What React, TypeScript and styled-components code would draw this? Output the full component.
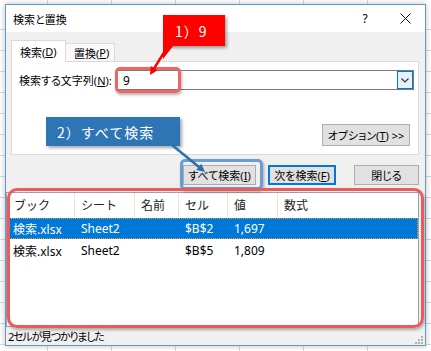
import styled, { createGlobalStyle } from "styled-components";

const GlobalStyle = createGlobalStyle`
  html, body {
    margin: 0;
    padding: 0;
  }
  body {
    width: 431px;
    height: 351px;
    overflow: hidden;
    font-family: "Noto Sans", "Noto Sans CJK JP", sans-serif;
    color: #000;
  }
`;

const Sheet = styled.div`
  position: relative;
  width: 431px;
  height: 351px;
  box-sizing: border-box;
  padding: 4px 0 0 5px;
  overflow: hidden;
  background-color: #fff;
  background-image: repeating-linear-gradient(
      to bottom,
      transparent 0 20px,
      #d8d8d8 20px 21px
    ),
    repeating-linear-gradient(to right, transparent 0 63px, #d8d8d8 63px 64px);
  background-position: 0 9px, -16px 0;
`;

const Dialog = styled.div`
  width: 421px;
  height: 342px;
  box-sizing: border-box;
  border: 1px solid #5c9bd6;
  background: #f0f0f0;
  display: flex;
  flex-direction: column;
  font-size: 11px;
  font-feature-settings: "palt";
  box-shadow: 0 0 6px rgba(0, 0, 0, 0.25);
`;

const TitleBar = styled.div`
  height: 27px;
  flex: none;
  background: #fff;
  display: flex;
  align-items: center;
  padding-left: 7px;
`;

const Title = styled.span`
  font-size: 11px;
`;

const TitleButton = styled.div`
  width: 40px;
  height: 27px;
  display: flex;
  align-items: center;
  justify-content: center;
  font-size: 12px;
  &:first-of-type {
    margin-left: auto;
  }
`;

const TopArea = styled.div`
  padding: 8px 6px 0 5px;
  display: flex;
  flex-direction: column;
`;

const Tabs = styled.div`
  display: flex;
  align-items: flex-end;
  height: 22px;
  margin-bottom: -1px;
  position: relative;
  z-index: 1;
`;

const Tab = styled.div<{ $active?: boolean; $w: number }>`
  width: ${(p) => p.$w}px;
  height: ${(p) => (p.$active ? 22 : 18)}px;
  margin-bottom: ${(p) => (p.$active ? 0 : 1)}px;
  box-sizing: border-box;
  padding-left: 8px;
  display: flex;
  align-items: center;
  background: ${(p) => (p.$active ? "#fff" : "#f9f9f9")};
  border: 1px solid #d9d9d9;
  border-left-width: ${(p) => (p.$active ? 1 : 0)}px;
  border-bottom: none;
`;

const Panel = styled.div`
  height: 94px;
  box-sizing: border-box;
  background: #fff;
  border: 1px solid #d9d9d9;
  padding: 8px 4px 8px 7px;
  display: flex;
  flex-direction: column;
  justify-content: space-between;
`;

const FindRow = styled.div`
  display: flex;
  align-items: center;
  height: 20px;
`;

const Label = styled.span`
  width: 98px;
`;

const ComboBox = styled.div`
  width: 297px;
  height: 20px;
  box-sizing: border-box;
  border: 1px solid #7a7a7a;
  background: #fff;
  display: flex;
  align-items: center;
  padding-left: 5px;
  font-size: 12px;
`;

const DropButton = styled.div`
  margin-left: auto;
  width: 16px;
  height: 18px;
  box-sizing: border-box;
  border: 1px solid #0078d7;
  background: #e5f1fb;
  display: flex;
  align-items: center;
  justify-content: center;
`;

const Button = styled.div<{ $w: number; $default?: boolean; $h?: number }>`
  width: ${(p) => p.$w}px;
  height: ${(p) => p.$h ?? 20}px;
  box-sizing: border-box;
  background: #e1e1e1;
  border: 1px solid ${(p) => (p.$default ? "#0078d7" : "#adadad")};
  box-shadow: ${(p) => (p.$default ? "inset 0 0 0 1px #0078d7" : "none")};
  display: flex;
  align-items: center;
  justify-content: center;
  flex: none;
`;

const OptionsButton = styled(Button)`
  align-self: flex-end;
  margin-right: 4px;
`;

const ButtonRow = styled.div`
  display: flex;
  justify-content: flex-end;
  gap: 12px;
  margin-top: 10px;
  height: 20px;
`;

const CloseButton = styled(Button)`
  margin-left: 6px;
`;

const Key = styled.span`
  text-decoration: underline;
`;

const ResultList = styled.div`
  margin-top: 7px;
  margin-right: 6px;
  height: 135px;
  flex: none;
  box-sizing: border-box;
  background: #fff;
  border: 1px solid #a0a0a0;
  font-size: 12px;
  font-feature-settings: normal;
`;

const columns = "68px 60px 44px 49px 50px 1fr";

const HeaderRow = styled.div`
  display: grid;
  grid-template-columns: ${columns};
  height: 24px;
`;

const HeaderCell = styled.div`
  display: flex;
  align-items: center;
  padding-left: 6px;
  border-right: 1px solid #e5e5e5;
  color: #222;
  &:first-child {
    padding-left: 7px;
  }
  &:last-child {
    border-right: none;
  }
`;

const Row = styled.div<{ $selected?: boolean }>`
  display: grid;
  grid-template-columns: ${columns};
  height: 21px;
  margin-top: 1px;
  box-sizing: border-box;
  background: ${(p) => (p.$selected ? "#0078d7" : "transparent")};
  color: ${(p) => (p.$selected ? "#fff" : "#000")};
  outline: ${(p) => (p.$selected ? "1px dotted #e0a050" : "none")};
  outline-offset: -1px;
`;

const Cell = styled.div`
  display: flex;
  align-items: center;
  padding-left: 6px;
  white-space: nowrap;
`;

const StatusBar = styled.div`
  flex: 1;
  display: flex;
  align-items: center;
  padding: 0 2px 0 2px;
  font-size: 11px;
`;

const StatusText = styled.span`
  letter-spacing: -1.2px;
`;

const Grip = styled.svg`
  margin-left: auto;
  align-self: flex-end;
  margin-bottom: 1px;
`;

const Mark = styled.div<{ $color: string; $radius: number }>`
  position: absolute;
  box-sizing: border-box;
  border: 3px solid ${(p) => p.$color};
  border-radius: ${(p) => p.$radius}px;
  box-shadow: 1px 2px 3px rgba(0, 0, 0, 0.3);
  pointer-events: none;
`;

const InputMark = styled(Mark)`
  left: 115px;
  top: 67px;
  width: 66px;
  height: 26px;
`;

const ButtonMark = styled(Mark)`
  left: 180px;
  top: 159px;
  width: 83px;
  height: 31px;
`;

const ListMark = styled(Mark)`
  left: 7px;
  top: 188px;
  width: 417px;
  height: 140px;
`;

const Callout = styled.div<{ $bg: string }>`
  position: absolute;
  box-sizing: border-box;
  display: flex;
  align-items: center;
  background: ${(p) => p.$bg};
  color: #fff;
  font-family: "Noto Sans CJK JP", sans-serif;
  font-size: 14px;
  letter-spacing: 1px;
  box-shadow: 2px 2px 3px rgba(0, 0, 0, 0.35);
`;

const FirstCallout = styled(Callout)`
  left: 163px;
  top: 15px;
  width: 62px;
  height: 31px;
  padding-left: 12px;
`;

const SecondCallout = styled(Callout)`
  left: 46px;
  top: 117px;
  width: 134px;
  height: 29px;
  padding-left: 11px;
`;

const ArrowLayer = styled.svg`
  position: absolute;
  left: 0;
  top: 0;
  pointer-events: none;
`;

type Pt = [number, number];

function Arrow({ from, to, color }: { from: Pt; to: Pt; color: string }) {
  const dx = to[0] - from[0];
  const dy = to[1] - from[1];
  const len = Math.hypot(dx, dy);
  const ux = dx / len;
  const uy = dy / len;
  const head = 8;
  const half = 4;
  const bx = to[0] - ux * head;
  const by = to[1] - uy * head;
  const pts = [
    `${to[0]},${to[1]}`,
    `${bx - uy * half},${by + ux * half}`,
    `${bx + uy * half},${by - ux * half}`,
  ].join(" ");
  return (
    <g>
      <line
        x1={from[0]}
        y1={from[1]}
        x2={bx + ux}
        y2={by + uy}
        stroke={color}
        strokeWidth={2.5}
      />
      <polygon points={pts} fill={color} />
    </g>
  );
}

const rows = [
  { book: "検索.xlsx", sheet: "Sheet2", name: "", cell: "$B$2", value: "1,697" },
  { book: "検索.xlsx", sheet: "Sheet2", name: "", cell: "$B$5", value: "1,809" },
];

export default function App() {
  return (
    <Sheet>
      <GlobalStyle />
      <Dialog>
        <TitleBar>
          <Title>検索と置換</Title>
          <TitleButton>?</TitleButton>
          <TitleButton>
            <svg width="11" height="11" viewBox="0 0 11 11">
              <path d="M0.5 0.5L10.5 10.5M10.5 0.5L0.5 10.5" stroke="#111" strokeWidth="1" />
            </svg>
          </TitleButton>
        </TitleBar>
        <TopArea>
          <Tabs>
            <Tab $active $w={55}>
              検索(<Key>D</Key>)
            </Tab>
            <Tab $w={49}>
              置換(<Key>P</Key>)
            </Tab>
          </Tabs>
          <Panel>
            <FindRow>
              <Label>
                検索する文字列(<Key>N</Key>):
              </Label>
              <ComboBox>
                9
                <DropButton>
                  <svg width="8" height="5" viewBox="0 0 8 5">
                    <path d="M0.5 0.5L4 4L7.5 0.5" fill="none" stroke="#333" strokeWidth="1.1" />
                  </svg>
                </DropButton>
              </ComboBox>
            </FindRow>
            <OptionsButton $w={88} $h={22}>
              オプション(<Key>T</Key>) &gt;&gt;
            </OptionsButton>
          </Panel>
          <ButtonRow>
            <Button $w={73}>
              すべて検索(<Key>I</Key>)
            </Button>
            <Button $w={68} $default>
              次を検索(<Key>F</Key>)
            </Button>
            <CloseButton $w={65}>閉じる</CloseButton>
          </ButtonRow>
        </TopArea>
        <ResultList>
          <HeaderRow>
            <HeaderCell>ブック</HeaderCell>
            <HeaderCell>シート</HeaderCell>
            <HeaderCell>名前</HeaderCell>
            <HeaderCell>セル</HeaderCell>
            <HeaderCell>値</HeaderCell>
            <HeaderCell>数式</HeaderCell>
          </HeaderRow>
          {rows.map((r, i) => (
            <Row key={r.cell} $selected={i === 0}>
              <Cell>{r.book}</Cell>
              <Cell>{r.sheet}</Cell>
              <Cell>{r.name}</Cell>
              <Cell>{r.cell}</Cell>
              <Cell>{r.value}</Cell>
              <Cell />
            </Row>
          ))}
        </ResultList>
        <StatusBar>
          <StatusText>2セルが見つかりました</StatusText>
          <Grip width="9" height="9" viewBox="0 0 9 9">
            {[
              [7, 1],
              [4, 4],
              [7, 4],
              [1, 7],
              [4, 7],
              [7, 7],
            ].map(([x, y]) => (
              <rect key={`${x}-${y}`} x={x} y={y} width="2" height="2" fill="#b0b0b0" />
            ))}
          </Grip>
        </StatusBar>
      </Dialog>

      <InputMark $color="#f06464" $radius={5} />
      <ButtonMark $color="#6b9bd1" $radius={5} />
      <ListMark $color="#ee5a5a" $radius={10} />

      <FirstCallout $bg="#ff0000">1）9</FirstCallout>
      <SecondCallout $bg="#2e75b6">2）すべて検索</SecondCallout>

      <ArrowLayer width="431" height="351" viewBox="0 0 431 351">
        <polygon points="163,45 174,45 163,59" fill="#ff0000" />
        <Arrow from={[168, 46]} to={[150, 75]} color="#ff0000" />
        <Arrow from={[172, 145]} to={[205, 172]} color="#2f6eaa" />
      </ArrowLayer>
    </Sheet>
  );
}
